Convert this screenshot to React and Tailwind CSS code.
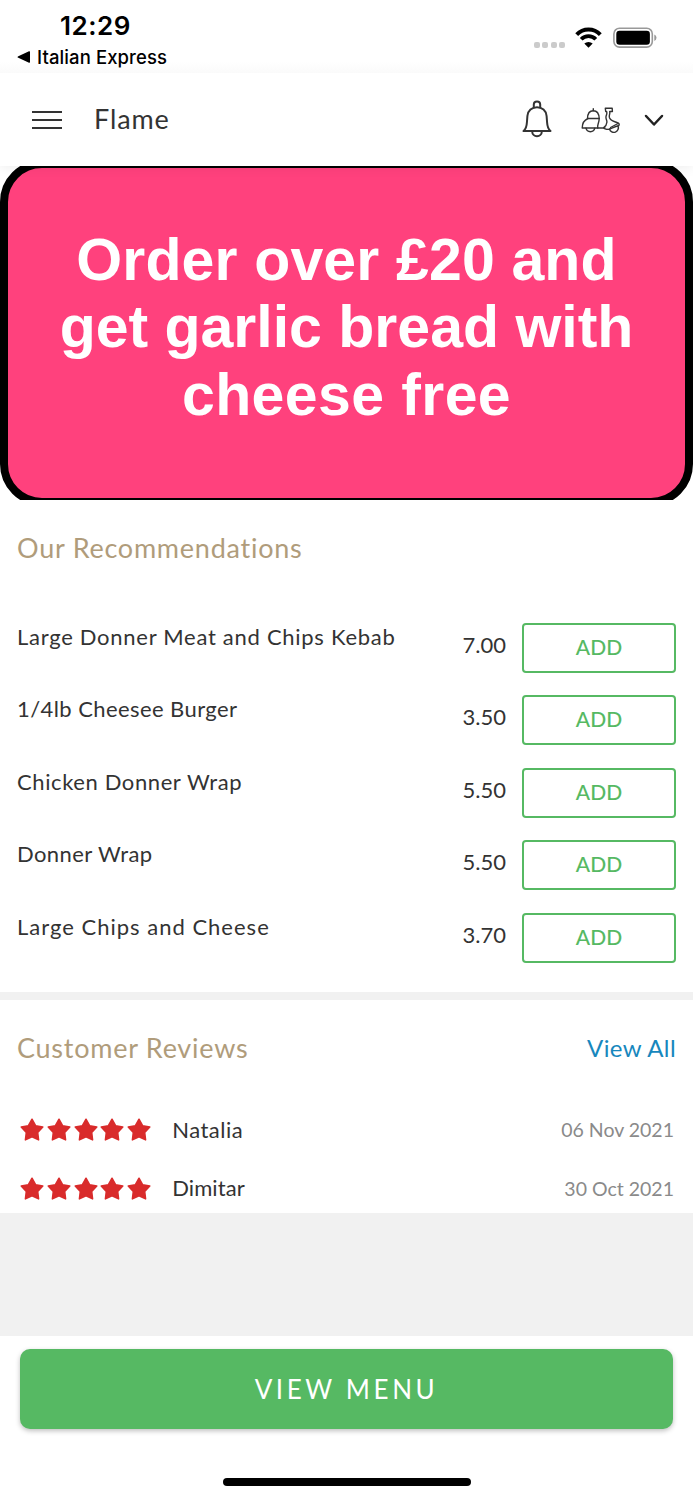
import React from 'react';

const items = [
    { name: 'Large Donner Meat and Chips Kebab', price: '7.00', tracking: 'tracking-[0.72px]' },
    { name: '1/4lb Cheesee Burger', price: '3.50', tracking: 'tracking-[0.42px]' },
    { name: 'Chicken Donner Wrap', price: '5.50', tracking: 'tracking-[0.6px]' },
    { name: 'Donner Wrap', price: '5.50', tracking: 'tracking-[0.4px]' },
    { name: 'Large Chips and Cheese', price: '3.70', tracking: 'tracking-[1px]' }
];

const reviews = [
    { name: 'Natalia', date: '06 Nov 2021', stars: 5, tracking: 'tracking-[0.5px]' },
    { name: 'Dimitar', date: '30 Oct 2021', stars: 5, tracking: 'tracking-[0.1px]' }
];

function StatusBar() {
    return (
        <div className="h-[73px] flex justify-between font-['Inter',sans-serif] text-black bg-[linear-gradient(#fff_85%,#fafafa)]">
            <div className="pl-[17px] pt-[10px]">
                <div className="pl-[43px] text-[26px] leading-8 font-semibold tracking-[0.5px]">12:29</div>
                <div className="flex items-center gap-[7px] mt-[2px] text-[18.5px] leading-[26px] font-medium tracking-[0.1px]">
                    <svg width="13" height="12" viewBox="0 0 13 12">
                        <path d="M1.3 5.2 12 .3q1-.3 1 .6v10.2q0 .9-1 .6L1.3 6.8q-1.6-.8 0-1.6Z" />
                    </svg>
                    Italian Express
                </div>
            </div>
            <div className="flex pt-[27px] pr-[36px]">
                <div className="flex gap-[2.4px] pt-[15px] mr-[10px]">
                    {[0, 1, 2, 3].map(i => (
                        <span key={i} className="w-[6px] h-[6px] rounded-[2px] bg-[#cbcbcb]" />
                    ))}
                </div>
                <svg width="27" height="21" viewBox="0 0 27 21" className="mr-[11px]">
                    <path d="M1.7 7.6a16.3 16.3 0 0 1 23.6 0" fill="none" stroke="#000" strokeWidth="4" />
                    <path d="M6.2 12.3a10 10 0 0 1 14.6 0" fill="none" stroke="#000" strokeWidth="3.8" />
                    <path d="M13.5 20.8 9.3 16.6a6.2 6.2 0 0 1 8.4 0Z" />
                </svg>
                <svg width="44" height="21" viewBox="0 0 44 21">
                    <rect x=".9" y="1.3" width="38.4" height="18.8" rx="5.6" fill="none" stroke="#999" strokeWidth="1.6" />
                    <rect x="3.3" y="3.8" width="33.6" height="14" rx="3.2" />
                    <path d="M41.3 7.5q2.2.8 2.2 3.2t-2.2 3.2Z" fill="#999" />
                </svg>
            </div>
        </div>
    );
}

function Header() {
    return (
        <header className="relative z-10 h-[93px] flex items-center pl-8 pr-[29px] bg-white shadow-[0_1px_12px_rgba(0,0,0,0.08)] [clip-path:inset(0_0_-16px_0)] text-[#333]">
            <div className="w-[30px] flex flex-col gap-[6px]">
                <span className="h-[2px] bg-[#333]" />
                <span className="h-[2px] bg-[#333]" />
                <span className="h-[2px] bg-[#333]" />
            </div>
            <h1 className="ml-8 text-[27px] tracking-[0.9px]">Flame</h1>
            <div className="ml-auto flex items-center">
                <svg width="30" height="38" viewBox="0 0 30 38" fill="none" stroke="#333" strokeWidth="2" strokeLinejoin="round" strokeLinecap="round" className="mb-[2px]">
                    <path d="M11.8 7.4V4.4q0-2.9 3.2-2.9t3.2 2.9v3" />
                    <path d="M1.5 31h27c-2.4-2-3.2-4.8-3.4-8.5l-.5-6.5C24.2 10.5 20 7.2 15 7.2S5.8 10.5 5.4 16l-.5 6.5C4.700 26.200 3.900 29 1.500 31Z" />
                    <path d="M10.200 31.400a4.800 4.800 0 0 0 9.600 0" />
                </svg>
                <svg width="39" height="27" viewBox="0 0 39 27" fill="none" stroke="#333" strokeWidth="1.4" strokeLinejoin="round" strokeLinecap="round" className="ml-[29px] mt-[2px]">
                    <path d="M12.300 1.700v2" />
                    <path d="M6.500 11.500c.1-4.800 2.400-7.800 5.800-7.800 3.500 0 5.700 3 5.900 7.800Z" />
                    <path d="M7 11.500C3.500 13 1.200 16.500 1.200 21h15.700c-1.200-3 1.200-3.800 1.300-9.500" />
                    <path d="M5 21.200a4.500 4.500 0 0 0 8.800 0M16.500 21H24" />
                    <path d="M24.300 1.200h6.900l.2 3.300h-2.700c.6 3-1 3.500-.2 6.300 1.200 3.600 4.500 3.300 8.900 5.300.8.8.9 1.900.3 2.600-4.500.5-7.200 3.300-10.200 3.700-1.800 0-4.200-.4-4.800-1.700 2.200-1.500 3-3.200 3.200-5.500.2-2-1.300-3.300-.9-5.500.4-2.400 1.400-3 .6-5.200h-.9Z" />
                    <path d="M28.500 22a4.500 4.500 0 1 0 8.400-3.100M29.500 20.500l7.500-4" />
                </svg>
                <svg width="20" height="13" viewBox="0 0 20 13" fill="none" stroke="#222" strokeWidth="2.5" strokeLinejoin="round" strokeLinecap="round" className="ml-6 mt-[2px]">
                    <path d="m2 2 8 8.500L18 2" />
                </svg>
            </div>
        </header>
    );
}

function Promo() {
    return (
        <div className="h-[334px] flex items-center overflow-hidden bg-white">
            <div className="h-[346px] shrink-0 w-full border-8 border-black rounded-[42px] bg-[#ff417d] pt-[59px] text-center font-['Liberation_Sans',Arial,sans-serif] font-bold text-[59px] leading-[67.3px] text-white whitespace-nowrap">
                <div className="tracking-[0.15px]">Order over £20 and</div>
                <div>get garlic bread with</div>
                <div className="tracking-[0.4px]">cheese free</div>
            </div>
        </div>
    );
}

function Star() {
    return (
        <svg width="24" height="24" viewBox="0 0 24 24" fill="#d92b2b" stroke="#d92b2b" strokeWidth="1.5" strokeLinejoin="round">
            <path d="m12 1.200 3.600 6.500 7.200 1.300-5.100 5.400.9 7.500-6.600-3.100-6.600 3.100.9-7.500L1.200 9l7.200-1.300Z" />
        </svg>
    );
}

export default function App() {
    return (
        <div className="w-[693px] h-[1500px] flex flex-col overflow-hidden bg-[#f1f1f1] font-['Lato',sans-serif] text-[#333]">
            <StatusBar />
            <Header />
            <Promo />

            <section className="h-[492px] px-[17px] pt-[28px] bg-white">
                <h2 className="text-[27px] leading-10 tracking-[0.75px] text-[#b09c7b]">Our Recommendations</h2>
                <ul className="mt-[55px] flex flex-col gap-[22.4px]">
                    {items.map(item => (
                        <li key={item.name} className="h-[50px] flex text-[22px] leading-7">
                            <span className={`flex-1 ${item.tracking}`}>{item.name}</span>
                            <span className="mr-4 pt-2">{item.price}</span>
                            <button className="w-[154px] h-[50px] pb-[2px] border-2 border-[#56b963] rounded-[4px] text-[21px] text-[#56b963] font-medium">
                                ADD
                            </button>
                        </li>
                    ))}
                </ul>
            </section>

            <section className="mt-[8px] h-[213px] px-[17px] pt-[28px] bg-white">
                <div className="flex items-center justify-between">
                    <h2 className="text-[27px] leading-10 tracking-[0.75px] text-[#b09c7b]">Customer Reviews</h2>
                    <a className="text-[24px] tracking-[0.4px] text-[#1787bd]">View All</a>
                </div>
                <ul className="mt-[47px] flex flex-col gap-[28.5px]">
                    {reviews.map(review => (
                        <li key={review.name} className="h-[30px] flex items-center pl-[3px] pr-[2px]">
                            <div className="flex gap-[2.8px]">
                                {Array.from({ length: review.stars }, (_, i) => <Star key={i} />)}
                            </div>
                            <span className={`ml-[21px] pb-[2px] text-[22px] ${review.tracking}`}>{review.name}</span>
                            <span className="ml-auto text-[19.5px] text-[#8a8a8a]">{review.date}</span>
                        </li>
                    ))}
                </ul>
            </section>

            <footer className="mt-auto h-[164px] px-5 pt-[13px] flex flex-col items-center bg-white">
                <button className="w-full h-[80px] rounded-[10px] bg-[#56b963] text-white text-[26px] tracking-[3.6px] shadow-[0_2px_5px_rgba(0,0,0,0.25)]">
                    VIEW MENU
                </button>
                <div className="mt-[49px] w-[248px] h-[8px] rounded-full bg-black" />
            </footer>
        </div>
    );
}
